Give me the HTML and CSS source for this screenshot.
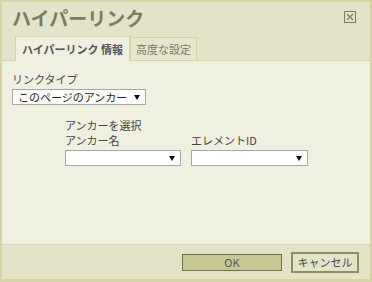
FILE: index.html
```html
<!DOCTYPE html>
<html lang="ja">

<head>
    <meta charset="UTF-8">
    <meta name="viewport" content="width=device-width, initial-scale=1.0">
    <title>ハイパーリンク</title>
    <link rel="stylesheet" href="styles.css">
</head>

<body>
    <div class="dialog">
        <div class="titlebar">
            <div class="title">ハイパーリンク</div>
            <div class="close">
                <svg width="12" height="12" viewBox="0 0 12 12">
                    <rect x="0.5" y="0.5" width="11" height="11" fill="none" stroke="#7b7b62" stroke-width="1" />
                    <path d="M3 3 L9 9 M9 3 L3 9" stroke="#7b7b62" stroke-width="1.2" />
                </svg>
            </div>
        </div>
        <div class="tabs">
            <div class="tab active">ハイパーリンク 情報</div>
            <div class="tab">高度な設定</div>
        </div>
        <div class="panel">
            <div class="label">リンクタイプ</div>
            <div class="select wide">
                <span>このページのアンカー</span>
                <i class="arrow"></i>
            </div>
            <div class="anchors">
                <div class="label">アンカーを選択</div>
                <div class="cols">
                    <div class="col">
                        <div class="label">アンカー名</div>
                        <div class="select"><span></span><i class="arrow"></i></div>
                    </div>
                    <div class="col">
                        <div class="label">エレメントID</div>
                        <div class="select"><span></span><i class="arrow"></i></div>
                    </div>
                </div>
            </div>
        </div>
        <div class="footer">
            <div class="btn ok">OK</div>
            <div class="btn cancel">キャンセル</div>
        </div>
    </div>
</body>

</html>
```

FILE: styles.css
```css
body {
    margin: 0;
    font-family: "Noto Sans CJK JP", "DejaVu Sans", sans-serif;
    font-size: 11px;
    color: #3c3c3c;
}

.dialog {
    width: 372px;
    height: 282px;
    box-sizing: border-box;
    border: 2px solid #d4d4a4;
    border-bottom-width: 3px;
    background-color: #e3e3c8;
    display: flex;
    flex-direction: column;
}

.titlebar {
    height: 34px;
    box-sizing: border-box;
    padding: 4px 14px 0 10px;
    display: flex;
    justify-content: space-between;
    align-items: flex-start;
}

.title {
    font-size: 19px;
    font-weight: bold;
    line-height: 24px;
    color: #7b7b63;
}

.close {
    margin-top: 5px;
    width: 12px;
    height: 12px;
}

.close svg {
    display: block;
}

.tabs {
    height: 24px;
    padding-left: 13px;
    display: flex;
    align-items: flex-end;
}

.tab {
    height: 23px;
    box-sizing: border-box;
    padding: 0 5px;
    border: 1px solid #d4d4a4;
    border-bottom: none;
    background-color: #e6e6cc;
    color: #7a7a6a;
    line-height: 22px;
}

.tab.active {
    position: relative;
    height: 25px;
    margin-bottom: -1px;
    padding: 0 6px;
    background-color: #f0f0e1;
    color: #555;
    font-weight: bold;
    line-height: 24px;
}

.panel {
    flex: 1;
    border-top: 1px solid #d4d4a4;
    background-color: #f0f0e1;
    padding: 10px 10px 0 10px;
}

.label {
    line-height: 16px;
    color: #444;
}

.select {
    height: 16px;
    box-sizing: border-box;
    margin-top: 2px;
    padding: 0 5px 0 5px;
    border: 1px solid #a6a6a6;
    background-color: #fff;
    display: flex;
    align-items: center;
    justify-content: space-between;
    color: #222;
    line-height: 14px;
}

.select.wide {
    width: 134px;
}

.arrow {
    width: 0;
    height: 0;
    border-left: 3px solid transparent;
    border-right: 3px solid transparent;
    border-top: 5px solid #111;
}

.anchors {
    margin-top: 13px;
    margin-left: 53px;
}

.anchors .label {
    line-height: 15px;
}

.cols {
    display: flex;
    gap: 10px;
}

.col {
    width: 116px;
}

.col+.col {
    width: 117px;
}

.footer {
    height: 35px;
    box-sizing: border-box;
    border-top: 1px solid #d8d8b4;
    padding-right: 11px;
    display: flex;
    justify-content: flex-end;
    align-items: center;
    gap: 9px;
}

.btn {
    box-sizing: border-box;
    text-align: center;
    color: #555;
    font-size: 11px;
}

.btn.ok {
    width: 100px;
    height: 17px;
    line-height: 15px;
    border: 1px solid #6e6e48;
    background-color: #c8c893;
}

.btn.cancel {
    width: 68px;
    height: 21px;
    line-height: 17px;
    border: 2px solid #8e8e66;
    background-color: #e4e4c8;
    color: #4a4a4a;
}
```
